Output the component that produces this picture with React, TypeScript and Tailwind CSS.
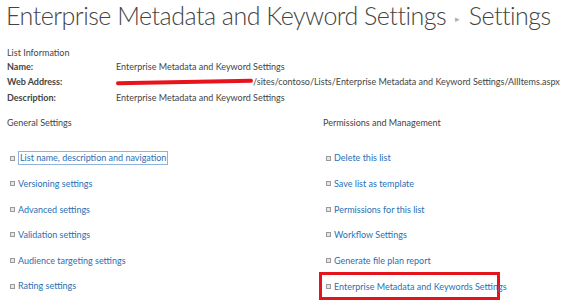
const general = [
  'List name, description and navigation',
  'Versioning settings',
  'Advanced settings',
  'Validation settings',
  'Audience targeting settings',
  'Rating settings',
];

const permissions = [
  'Delete this list',
  'Save list as template',
  'Permissions for this list',
  'Workflow Settings',
  'Generate file plan report',
  'Enterprise Metadata and Keywords Settings',
];

function Bullet() {
  return <span className="mr-[3px] inline-block h-[5px] w-[5px] shrink-0 border border-[#9a9a9a] bg-[#e6e6e6]" />;
}

function SettingLink({ label, focused, boxed }: { label: string; focused?: boolean; boxed?: boolean }) {
  const content = (
    <div className={boxed ? 'flex h-full items-center' : 'flex h-[25.6px] items-center'}>
      <Bullet />
      <span className={focused ? 'border border-[#8fb4dc] px-px leading-[12px] text-[#2a6fb5]' : 'text-[#2a6fb5]'}>{label}</span>
    </div>
  );
  if (boxed) {
    return <div className="-my-[1px] -ml-[7px] h-[28px] w-[181px] border-[3px] border-[#e4141c] pl-[4px]">{content}</div>;
  }
  return content;
}

export default function App() {
  return (
    <div className="h-[303px] w-[566px] overflow-hidden whitespace-nowrap bg-white font-['Lato',sans-serif] text-[9px] text-[#444]">
      <h1 className="pl-[6px] text-[25px] font-light leading-[30px] tracking-[-0.5px] text-[#444]">
        Enterprise Metadata and Keyword Settings
        <span className="mx-[9px] align-middle text-[9px] text-[#b0b0b0]">▸</span>
        Settings
      </h1>

      <div className="pl-[7px] pt-[11px]">
        <div className="leading-[15px]">List Information</div>
        <div className="-mt-[1px] grid grid-cols-[109px_1fr] leading-[15.5px]">
          <div className="font-bold">Name:</div>
          <div>Enterprise Metadata and Keyword Settings</div>
          <div className="font-bold">Web Address:</div>
          <div className="flex items-center">
            <span className="inline-block h-[4px] w-[137px] -rotate-1 rounded-full bg-[#e8141c]" />
            <span>/sites/contoso/Lists/Enterprise Metadata and Keyword Settings/AllItems.aspx</span>
          </div>
          <div className="font-bold">Description:</div>
          <div>Enterprise Metadata and Keyword Settings</div>
        </div>
      </div>

      <div className="mt-[10px] flex pl-[7px]">
        <div className="w-[316px]">
          <div className="leading-[15px]">General Settings</div>
          <div className="mt-[15px] pl-[3px]">
            {general.map((g, i) => (
              <SettingLink key={g} label={g} focused={i === 0} />
            ))}
          </div>
        </div>
        <div className="flex-1">
          <div className="leading-[15px]">Permissions and Management</div>
          <div className="mt-[15px] pl-[3px]">
            {permissions.map((p, i) => (
              <SettingLink key={p} label={p} boxed={i === permissions.length - 1} />
            ))}
          </div>
        </div>
      </div>
    </div>
  );
}
